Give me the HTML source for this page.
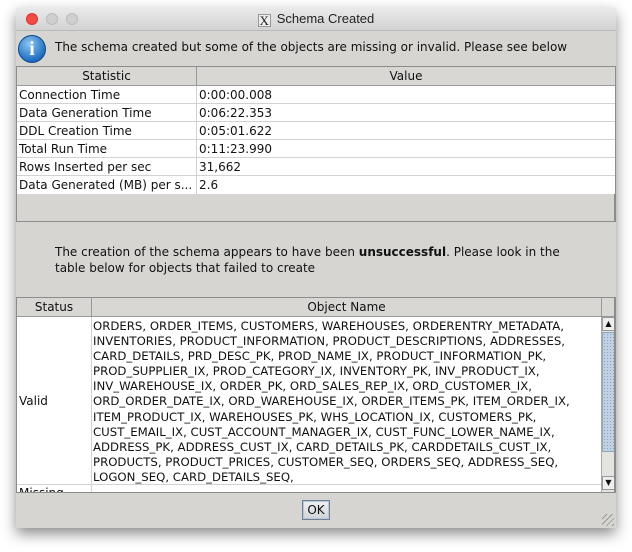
<!DOCTYPE html>
<html><head><style>
*{margin:0;padding:0;box-sizing:border-box}
body{width:632px;height:552px;background:#fff;position:relative;overflow:hidden;font-family:"DejaVu Sans","Liberation Sans",sans-serif;font-size:12px;color:#111}
.win{position:absolute;left:16px;top:7px;width:600px;height:521px;background:#d6d5d2;box-shadow:0 6px 14px rgba(0,0,0,.45);border-radius:5px 5px 0 0;overflow:hidden}
.title{position:absolute;left:0;top:0;width:600px;height:24px;background:linear-gradient(#ecebeb,#d3d2d2);border-bottom:1px solid #b8b8b8;text-align:center;font-family:"Liberation Sans",sans-serif;font-size:13px;line-height:24px;color:#222}
.dot{position:absolute;top:6px;width:12px;height:12px;border-radius:50%}
.abs{position:absolute}
.t{position:absolute;white-space:nowrap}
.hdr{background:#d8d7d4;border-bottom:1px solid #9a9a9a;text-align:center;height:19px;line-height:19px}
.row{position:absolute;left:0;height:18px;line-height:18px;border-bottom:1px solid #d2d2d2;background:#fff;width:598px}
</style></head><body>
<div class="win">
 <div class="title">
  <div class="dot" style="left:10px;background:#f24a45;border:1px solid #d33"></div>
  <div class="dot" style="left:30px;background:#d0cfcf;border:1px solid #bbb"></div>
  <div class="dot" style="left:50px;background:#d0cfcf;border:1px solid #bbb"></div>
  <span style="display:inline-block;width:13px;height:13px;border:1px solid #999;background:#eee;font-family:'Liberation Serif',serif;font-size:13px;line-height:12px;vertical-align:-2px;margin-right:6px">X</span>Schema Created
 </div>
 <div class="abs" style="left:2px;top:28px;width:28px;height:28px;border-radius:50%;background:radial-gradient(circle at 40% 30%,#8cc6f2,#1f6fc0 70%,#134f93);border:1px solid #0d4a88;color:#fff;font-family:'Liberation Serif',serif;font-weight:bold;font-size:20px;text-align:center;line-height:27px">i</div>
 <div class="t" style="left:39px;top:33px">The schema created but some of the objects are missing or invalid. Please see below</div>

 <div class="abs" style="left:0;top:59px;width:600px;height:156px;border:1px solid #8c8c8c;border-right:2px solid #8c8c8c;background:#d6d5d2">
  <div class="abs hdr" style="left:0;top:0;width:180px;border-right:1px solid #9a9a9a">Statistic</div>
  <div class="abs hdr" style="left:180px;top:0;width:418px">Value</div>
  <div class="row" style="top:19px"><span class="t" style="left:2px">Connection Time</span><span class="t" style="left:182px">0:00:00.008</span></div>
  <div class="row" style="top:37px"><span class="t" style="left:2px">Data Generation Time</span><span class="t" style="left:182px">0:06:22.353</span></div>
  <div class="row" style="top:55px"><span class="t" style="left:2px">DDL Creation Time</span><span class="t" style="left:182px">0:05:01.622</span></div>
  <div class="row" style="top:73px"><span class="t" style="left:2px">Total Run Time</span><span class="t" style="left:182px">0:11:23.990</span></div>
  <div class="row" style="top:91px"><span class="t" style="left:2px">Rows Inserted per sec</span><span class="t" style="left:182px">31,662</span></div>
  <div class="row" style="top:109px;border-bottom:none"><span class="t" style="left:2px">Data Generated (MB) per s...</span><span class="t" style="left:182px">2.6</span></div>
  <div class="abs" style="left:179px;top:19px;width:1px;height:108px;background:#d2d2d2"></div>
 </div>

 <div class="t" style="left:39px;top:238px">The creation of the schema appears to have been <b>unsuccessful</b>. Please look in the</div>
 <div class="t" style="left:39px;top:254px">table below for objects that failed to create</div>

 <div class="abs" style="left:0;top:290px;width:600px;height:196px;border:1px solid #8c8c8c;border-right:2px solid #8c8c8c;background:#fff;overflow:hidden">
  <div class="abs hdr" style="left:0;top:0;width:75px;border-right:1px solid #9a9a9a">Status</div>
  <div class="abs hdr" style="left:75px;top:0;width:509px">Object Name</div>
  <div class="abs hdr" style="left:584px;top:0;width:14px;border-left:1px solid #9a9a9a"></div>
  <div class="abs" style="left:74px;top:19px;width:1px;height:180px;background:#d2d2d2"></div>
  <div class="abs" style="left:0;top:186px;width:584px;height:1px;background:#d2d2d2"></div>
  <div class="t" style="left:2px;top:96px">Valid</div>
  <div class="t" style="left:2px;top:188px">Missing</div>
  <div class="abs" style="left:76px;top:21px;line-height:15.1px;white-space:pre;font-size:11.72px">ORDERS, ORDER_ITEMS, CUSTOMERS, WAREHOUSES, ORDERENTRY_METADATA,
INVENTORIES, PRODUCT_INFORMATION, PRODUCT_DESCRIPTIONS, ADDRESSES,
CARD_DETAILS, PRD_DESC_PK, PROD_NAME_IX, PRODUCT_INFORMATION_PK,
PROD_SUPPLIER_IX, PROD_CATEGORY_IX, INVENTORY_PK, INV_PRODUCT_IX,
INV_WAREHOUSE_IX, ORDER_PK, ORD_SALES_REP_IX, ORD_CUSTOMER_IX,
ORD_ORDER_DATE_IX, ORD_WAREHOUSE_IX, ORDER_ITEMS_PK, ITEM_ORDER_IX,
ITEM_PRODUCT_IX, WAREHOUSES_PK, WHS_LOCATION_IX, CUSTOMERS_PK,
CUST_EMAIL_IX, CUST_ACCOUNT_MANAGER_IX, CUST_FUNC_LOWER_NAME_IX,
ADDRESS_PK, ADDRESS_CUST_IX, CARD_DETAILS_PK, CARDDETAILS_CUST_IX,
PRODUCTS, PRODUCT_PRICES, CUSTOMER_SEQ, ORDERS_SEQ, ADDRESS_SEQ,
LOGON_SEQ, CARD_DETAILS_SEQ,</div>
  <div class="abs" style="left:584px;top:19px;width:14px;height:176px;background:#e4e3e0;border-left:1px solid #aaa">
   <div class="abs" style="left:0;top:0;width:13px;height:14px;background:#eee;border:1px solid #999;font-size:8px;text-align:center;line-height:12px">&#9650;</div>
   <div class="abs" style="left:0;top:15px;width:13px;height:120px;background:#c2d2e4;background-image:radial-gradient(#8aa2c0 0.7px,transparent 0.8px);background-size:3px 3px;border:1px solid #8aa"></div>
   <div class="abs" style="left:0;top:159px;width:13px;height:14px;background:#eee;border:1px solid #999;font-size:8px;text-align:center;line-height:12px">&#9660;</div>
  </div>
 </div>

 <div class="abs" style="left:286px;top:493px;width:28px;height:20px;border:1px solid #6d7f95;background:linear-gradient(#f0f0f0,#cfd3d8);box-shadow:inset 0 0 0 1px #b8c6d8;text-align:center;line-height:18px">OK</div>
 <div class="abs" style="left:586px;top:507px;width:12px;height:12px;background:repeating-linear-gradient(135deg,transparent 0 3px,#999 3px 4px)"></div>
</div>
</body></html>
